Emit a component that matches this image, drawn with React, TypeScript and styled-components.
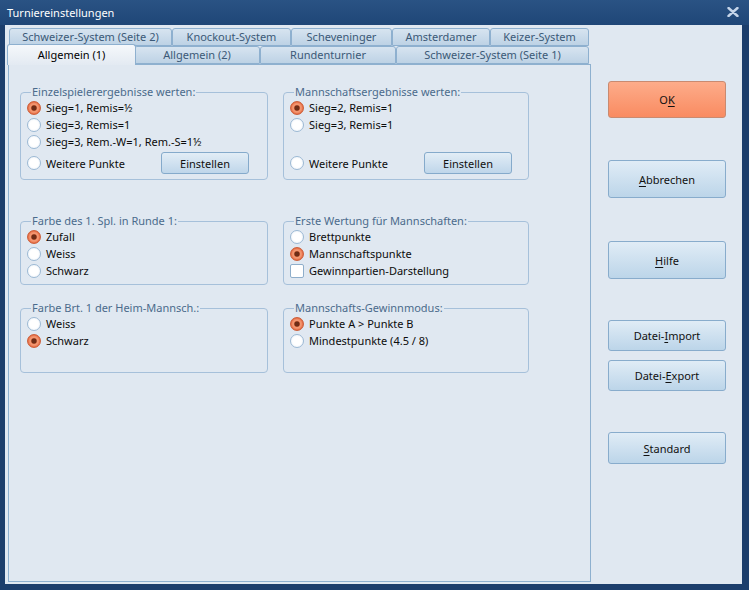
import React from 'react';
import styled, { createGlobalStyle } from 'styled-components';

const FONT = `"Noto Sans", "Open Sans", "DejaVu Sans", sans-serif`;

const Global = createGlobalStyle`
  html, body { margin: 0; padding: 0; background: #1c3e6c; }
  body { font-family: ${FONT}; font-size: 11px; }
  * { box-sizing: border-box; }
`;

const Window = styled.div`
  width: 749px;
  height: 590px;
  display: flex;
  flex-direction: column;
  background: #1c3e6c;
  overflow: hidden;
  font-family: ${FONT};
`;

const TitleBar = styled.div`
  height: 25px;
  flex: none;
  display: flex;
  align-items: center;
  justify-content: space-between;
  padding: 0 10px 1px 7px;
  background: linear-gradient(#2a5384, #1f4677);
  color: #ffffff;
  font-size: 11px;
`;

const CloseIcon = styled.svg`
  width: 12px;
  height: 10px;
  display: block;
`;

const Client = styled.div`
  flex: 1;
  margin: 0 7px 6px 5px;
  background: #e0e8f1;
  display: flex;
  gap: 17px;
  padding: 3px 0 2px 3px;
`;

const TabControl = styled.div`
  width: 583px;
  display: flex;
  flex-direction: column;
`;

const TabRow = styled.div`
  display: flex;
  height: 18px;
  padding-left: 1px;
  flex: none;
`;

const Tab = styled.div<{ $w: number; $active?: boolean }>`
  width: ${(p) => p.$w + (p.$active ? 4 : 0)}px;
  height: ${(p) => (p.$active ? 21 : 18)}px;
  margin: ${(p) => (p.$active ? '-2px -2px 0 -2px' : '0')};
  position: relative;
  z-index: ${(p) => (p.$active ? 2 : 1)};
  border: 1px solid #8eb0cf;
  border-bottom: ${(p) => (p.$active ? 'none' : '1px solid #8eb0cf')};
  border-radius: 3px 3px 0 0;
  background: ${(p) =>
    p.$active
      ? 'linear-gradient(#f5f8fb, #e3eaf2)'
      : 'linear-gradient(#d7e4f0, #bdd2e5)'};
  color: ${(p) => (p.$active ? '#000000' : '#3b5977')};
  font-size: 11px;
  line-height: 16px;
  display: flex;
  align-items: ${(p) => (p.$active ? 'flex-start' : 'center')};
  padding-top: ${(p) => (p.$active ? '2px' : '0')};
  justify-content: center;
  white-space: nowrap;
`;

const Panel = styled.div`
  flex: 1;
  border: 1px solid #8eb0cf;
  background: #e0e8f1;
  padding: 27px 0 0 11px;
`;

const Grid = styled.div`
  display: grid;
  grid-template-columns: 248px 246px;
  column-gap: 15px;
`;

const Group = styled.div<{ $h: number; $mt?: number }>`
  position: relative;
  height: ${(p) => p.$h}px;
  margin-top: ${(p) => p.$mt ?? 0}px;
  border: 1px solid #a6c0da;
  border-radius: 4px;
  padding: 6px 0 0 6px;
`;

const Legend = styled.span`
  position: absolute;
  top: -9px;
  left: 10px;
  padding: 0 1px;
  background: #e0e8f1;
  color: #4b6b8c;
  font-size: 11px;
  line-height: 16px;
  white-space: nowrap;
`;

const Option = styled.div`
  display: flex;
  align-items: center;
  gap: 5px;
  height: 17px;
  color: #0c0c0c;
  font-size: 11px;
  white-space: nowrap;
`;

const Spacer = styled.div`
  height: 17px;
`;

const Radio = styled.span<{ $on?: boolean }>`
  width: 14px;
  height: 14px;
  flex: none;
  border-radius: 50%;
  border: 1px solid ${(p) => (p.$on ? '#cc5f3a' : '#9cb9d4')};
  background: ${(p) =>
    p.$on
      ? 'radial-gradient(circle, #6f2d17 0 2.2px, #c8603c 2.8px, #f39c76 3.6px, #f08660 5px, #e4683e 6px)'
      : 'radial-gradient(circle, #ffffff 0 4px, #f4f7fb 6px)'};
`;

const Check = styled.span`
  width: 14px;
  height: 14px;
  flex: none;
  border-radius: 2px;
  border: 1px solid #8eaecb;
  background: #ffffff;
`;

const ButtonRow = styled.div`
  display: grid;
  grid-template-columns: 134px 88px;
  align-items: center;
  margin-top: 2px;
`;

const SmallButton = styled.div`
  height: 22px;
  border: 1px solid #85aacb;
  border-radius: 3px;
  background: linear-gradient(#e2edf6, #bfd6ea);
  display: flex;
  align-items: center;
  justify-content: center;
  color: #111111;
  font-size: 11px;
`;

const Side = styled.div`
  width: 118px;
  display: flex;
  flex-direction: column;
`;

const SideButton = styled.div<{ $h: number; $mt: number; $primary?: boolean }>`
  height: ${(p) => p.$h}px;
  margin-top: ${(p) => p.$mt}px;
  border: 1px solid ${(p) => (p.$primary ? '#c98a70' : '#88accc')};
  border-radius: 3px;
  background: ${(p) =>
    p.$primary
      ? 'linear-gradient(#fdac8a, #f98b61)'
      : 'linear-gradient(#e0ecf6, #bcd5e9)'};
  display: flex;
  align-items: center;
  justify-content: center;
  color: #111111;
  font-size: 11px;
`;

const U = styled.span`
  text-decoration: underline;
  text-underline-offset: 2px;
`;

const row1 = [
  { label: 'Schweizer-System (Seite 2)', w: 163 },
  { label: 'Knockout-System', w: 119 },
  { label: 'Scheveninger', w: 101 },
  { label: 'Amsterdamer', w: 98 },
  { label: 'Keizer-System', w: 99 },
];

const row2 = [
  { label: 'Allgemein (1)', w: 125, active: true },
  { label: 'Allgemein (2)', w: 126 },
  { label: 'Rundenturnier', w: 136 },
  { label: 'Schweizer-System (Seite 1)', w: 193 },
];

const Opt = ({ label, on, check }: { label: string; on?: boolean; check?: boolean }) => (
  <Option>
    {check ? <Check /> : <Radio $on={on} />}
    <span>{label}</span>
  </Option>
);

export default function App() {
  return (
    <>
      <Global />
      <Window>
        <TitleBar>
          <span>Turniereinstellungen</span>
          <CloseIcon viewBox="0 0 12 10">
            <path d="M1.5 1 L10.5 9 M10.5 1 L1.5 9" stroke="#c6d6ea" strokeWidth="2.4" strokeLinecap="round" />
          </CloseIcon>
        </TitleBar>
        <Client>
          <TabControl>
            <TabRow>
              {row1.map((t) => (
                <Tab key={t.label} $w={t.w}>{t.label}</Tab>
              ))}
            </TabRow>
            <TabRow>
              {row2.map((t) => (
                <Tab key={t.label} $w={t.w} $active={t.active}>{t.label}</Tab>
              ))}
            </TabRow>
            <Panel>
              <Grid>
                <Group $h={88}>
                  <Legend>Einzelspielerergebnisse werten:</Legend>
                  <Opt label="Sieg=1, Remis=½" on />
                  <Opt label="Sieg=3, Remis=1" />
                  <Opt label="Sieg=3, Rem.-W=1, Rem.-S=1½" />
                  <ButtonRow>
                    <Opt label="Weitere Punkte" />
                    <SmallButton>Einstellen</SmallButton>
                  </ButtonRow>
                </Group>
                <Group $h={88}>
                  <Legend>Mannschaftsergebnisse werten:</Legend>
                  <Opt label="Sieg=2, Remis=1" on />
                  <Opt label="Sieg=3, Remis=1" />
                  <Spacer />
                  <ButtonRow>
                    <Opt label="Weitere Punkte" />
                    <SmallButton>Einstellen</SmallButton>
                  </ButtonRow>
                </Group>
                <Group $h={64} $mt={41}>
                  <Legend>Farbe des 1. Spl. in Runde 1:</Legend>
                  <Opt label="Zufall" on />
                  <Opt label="Weiss" />
                  <Opt label="Schwarz" />
                </Group>
                <Group $h={64} $mt={41}>
                  <Legend>Erste Wertung für Mannschaften:</Legend>
                  <Opt label="Brettpunkte" />
                  <Opt label="Mannschaftspunkte" on />
                  <Opt label="Gewinnpartien-Darstellung" check />
                </Group>
                <Group $h={65} $mt={23}>
                  <Legend>Farbe Brt. 1 der Heim-Mannsch.:</Legend>
                  <Opt label="Weiss" />
                  <Opt label="Schwarz" on />
                </Group>
                <Group $h={65} $mt={23}>
                  <Legend>Mannschafts-Gewinnmodus:</Legend>
                  <Opt label="Punkte A > Punkte B" on />
                  <Opt label="Mindestpunkte (4.5 / 8)" />
                </Group>
              </Grid>
            </Panel>
          </TabControl>
          <Side>
            <SideButton $h={37} $mt={53} $primary>
              <span>O<U>K</U></span>
            </SideButton>
            <SideButton $h={38} $mt={42}>
              <span><U>A</U>bbrechen</span>
            </SideButton>
            <SideButton $h={38} $mt={43}>
              <span><U>H</U>ilfe</span>
            </SideButton>
            <SideButton $h={31} $mt={41}>
              <span>Datei-<U>I</U>mport</span>
            </SideButton>
            <SideButton $h={31} $mt={9}>
              <span>Datei-<U>E</U>xport</span>
            </SideButton>
            <SideButton $h={32} $mt={41}>
              <span><U>S</U>tandard</span>
            </SideButton>
          </Side>
        </Client>
      </Window>
    </>
  );
}
